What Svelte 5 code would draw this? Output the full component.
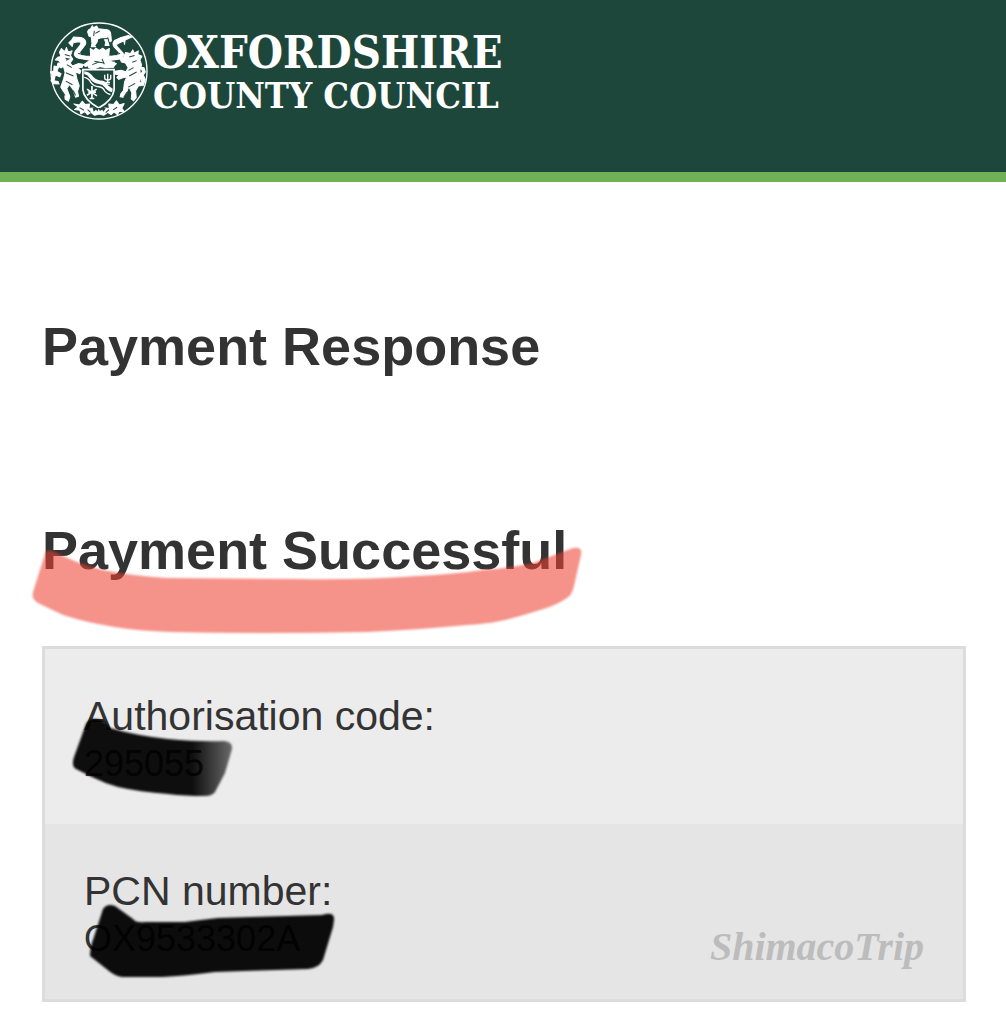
<script>
    const details = [
        { id: "auth", label: "Authorisation code:", value: "295055" },
        { id: "pcn", label: "PCN number:", value: "OX9533302A" },
    ];
</script>

<header class="site-header">
    <a class="logo" href="/" aria-label="Oxfordshire County Council">
        <svg class="crest" viewBox="33 22 292 292" aria-hidden="true">
            <circle cx="179" cy="168" r="143" fill="none" stroke="#fff" stroke-width="4" />
            <g fill="#fff" stroke="#fff" stroke-width="3" stroke-linejoin="round">
                <!-- Ox on the helm -->
                <path d="M154 42l5-9 4 6 9-5 5 8 26 3q10 2 11 13l2 20-4 3-6-20-4 9 7 22h-12l2-8-5-14-18 1-3 12-7 8 3 5h-13l2-10-2-19-7-3-4-13q1-7 9-9z" />
                <path d="M153 101l9 6 8-7 10 7 10-7 9 7 11-6-2 22-54 1z" />
                <!-- Mantling ribbons -->
                <path d="M103 67l22 1q17 4 14 20l-8 11-10 13 5 10 29 3 52-1 26-2 7-9-16-17q-7-9 1-19l20-9 21-6 11 5-20 9-2 13-2-11-17 8q-9 4 0 12l15 17q4 12-9 17l-32 5 21 9-7 7-23-12-36 1-26 13-7-5 21-14-35-6q-18-6-10-21l14-17q8-10-5-11l-15 3-3 11-10-11 9-9z" />
                <path d="M144 148q12-18 37-20l24 9 14 13-15 8-22-3-18 7-16-4z" />
                <!-- Left supporter -->
                <path d="M67 101l10 9 5-12 5 13 12-3-5 14 7 11-8 11 7 9 17-7 14 2-2 9-14 1 10 9-3 9-13-6 4 21 7 21-5 17 3 14-9 3-7-22-11-16-8 12 9 24-4 14-10-6-1-16-12-20 9-26 4-18-5-18-8 5-10-8 2-7 9 1-8-9-9-1 7-8 10-2-5-13z" />
                <path d="M45 153l14 2-5 14 12 7-4 9-13-5-4 17 12 2 3 8-16-1-8-9 5-17-7-9 10-3z" />
                <!-- Right supporter -->
                <path d="M258 113l15 3 7-11 4 10 12-7-1 11 12 5-6 11 5 15-5 16 2 22-5 22-10 17 2 20-8 10-7-6 2-18-9-19-8 20-9 12-9-1 2-9 8-10 3-25 7-15-12 2-12 5-6-6 8-8-12-1-2-9 19-3 14 4 7-12-8-14-12-3-5-11 12-3z" />
                <path d="M291 175l9 3 9-7-5-14 9 1 4 13-6 9 6 13-6 18-13 1-2-7 11-4-3-11-13-4z" />
                <!-- Small crown over the shield -->
                <path d="M192 145l8 8 6-11 8 8 10-9-1 16-28 1z" />
                <!-- Compartment -->
                <path d="M104 266l17 3 8-11 9 10 13-2-2 14 13-2 7 11 10-9 11 9 6-11 14 2-2-14 14 2 9-11 8 12 15-4-7 14 7 10-15-1-5 10-10-8-9 8-10-7-12 9-13-4-14 4-11-9-10 7-8-9-12 7-3-11-16-2 11-8z" />
            </g>
            <g fill="none" stroke="#1e473b" stroke-width="3">
                <path d="M165 48l-2 16M182 73l23-2M168 56l13-7" />
                <path d="M117 116l28 5M215 120l27-4M165 139l28 5M159 149l20-8M188 132l7 16" />
                <path d="M77 119l15 4M79 130l10 2-8 4M83 149l15 9M80 173l23 10M80 198l20 11M102 226l7 15M70 231l8 10" />
                <path d="M285 122l-16 4M291 137l-13 5M282 158l-15 8M291 171l-22 12M287 205l-21 11M262 231l-9 15" />
                <path d="M121 277l13 8M145 283l9 8M199 292l10-9M221 284l12-8" />
            </g>
            <!-- Shield -->
            <path d="M131 164h93v60q-4 31-46 54-44-25-47-54z" fill="#1e473b" stroke="#fff" stroke-width="5" />
            <path d="M135 169q15 2 23 12 9 14 24 15 18 0 24 15l14 10-2 10q-15-4-21-14-7-9-19-10-19-3-27-18-6-10-16-12z" fill="#fff" />
            <path d="M135 187q13 2 19 14 9 13 25 14 13 2 17 13 7 8 17 10" fill="none" stroke="#fff" stroke-width="4" />
            <path d="M158 213v39M143 222l30 20M143 240l29-18M147 231h23M151 250h14" fill="none" stroke="#fff" stroke-width="5" />
            <path d="M196 179v10q0 6 9 6t9-6v-10M205 176v26M199 202h13M200 207h11" fill="none" stroke="#fff" stroke-width="4" />
            <path d="M160 278h39l-6 11-8-5-7 8-7-8-8 5z" fill="#1e473b" />
            <path d="M165 293l4-10 5 7 4-10 5 10 6-7 3 10z" fill="#fff" />
        </svg>
        <span class="wordmark">
            <span class="wordmark-top">OXFORDSHIRE</span>
            <span class="wordmark-bottom">COUNTY COUNCIL</span>
        </span>
    </a>
</header>

<main>
    <h1>Payment Response</h1>

    <h2>
        Payment Successful
        <svg class="marker" viewBox="26 540 564 100" aria-hidden="true">
            <path
                d="M45 554Q46 548 55 552Q75 563 103 570Q133 576 167 578L300 579Q360 580 417 576Q455 574 483 570Q510 568 533 563L573 548Q583 546 581 555L574 586Q572 595 567 598Q555 606 540 610Q515 618 500 621Q485 624 467 625Q415 630 367 632Q270 634 170 632Q110 630 63 615L38 603Q31 599 33 592Z"
                fill="#ee4030"
                fill-opacity="0.57"
            />
        </svg>
    </h2>

    <dl class="details">
        {#each details as item}
            <div class="detail-row">
                <dt>{item.label}</dt>
                <dd>{item.value}</dd>
                {#if item.id === "auth"}
                    <svg class="scribble scribble-auth" viewBox="65 709 180 96" aria-hidden="true">
                        <defs>
                            <linearGradient id="ink-fade">
                                <stop offset="0.75" stop-color="#000" stop-opacity="0.94" />
                                <stop offset="1" stop-color="#000" stop-opacity="0.55" />
                            </linearGradient>
                        </defs>
                        <path
                            d="M86 724Q90 716 104 721L110 728Q138 736 168 739Q200 742 224 741Q233 742 232 749L225 773L215 792Q212 796 205 796Q185 796 168 794Q140 792 118 787Q104 783 92 777L76 769Q71 766 74 757Z"
                            fill="url(#ink-fade)"
                        />
                    </svg>
                {:else}
                    <svg class="scribble scribble-pcn" viewBox="75 894 270 96" aria-hidden="true">
                        <path
                            d="M103 909Q107 903 115 906L133 919Q136 923 145 922L185 922Q200 920 218 918L322 915Q335 911 334 920L333 927L323 960Q319 968 308 969L215 972Q185 976 162 977L122 977Q115 976 109 971L90 956Q90 947 94 937Z"
                            fill="#000"
                            fill-opacity="0.95"
                        />
                    </svg>
                {/if}
            </div>
        {/each}
        <div class="watermark">ShimacoTrip</div>
    </dl>
</main>

<style>
    :global(body) {
        margin: 0;
        background: #fff;
        color: #333;
        font-family: "Liberation Sans", Arial, sans-serif;
    }

    /* Header */
    .site-header {
        box-sizing: border-box;
        min-height: 182px;
        padding: 22px 50px;
        background: #1e473b;
        border-bottom: 10px solid #70b158;
    }

    .logo {
        display: inline-flex;
        gap: 5px;
        color: #fff;
        text-decoration: none;
    }

    .crest {
        width: 98px;
        height: 98px;
    }

    .wordmark {
        display: flex;
        flex-direction: column;
        padding-top: 8px;
        font-family: "DejaVu Serif Condensed", "DejaVu Serif", serif;
        font-weight: bold;
        white-space: nowrap;
    }

    .wordmark-top {
        font-size: 45px;
        line-height: 46px;
    }

    .wordmark-bottom {
        font-size: 36px;
        line-height: 38px;
    }

    /* Content */
    main {
        padding: 132px 40px 22px 42px;
    }

    h1,
    h2 {
        margin: 0;
        font-size: 54px;
        line-height: 64px;
    }

    h2 {
        position: relative;
        margin: 140px 0 64px;
    }

    .marker {
        position: absolute;
        left: -16px;
        top: 22px;
        width: 564px;
        height: 100px;
        filter: blur(1px);
    }

    .details {
        position: relative;
        margin: 0;
        border: 3px solid #dcdcdc;
    }

    .detail-row {
        position: relative;
        padding: 43px 39px 36px;
        background: #ececec;
    }

    .detail-row:nth-child(even) {
        background: #e5e5e5;
    }

    dt {
        font-size: 41px;
        line-height: 48px;
    }

    dd {
        margin: 0;
        font-size: 36px;
        line-height: 48px;
    }

    /* Pen strokes over the values */
    .scribble {
        position: absolute;
        height: 96px;
        filter: blur(1px);
    }

    .scribble-auth {
        left: 20px;
        top: 60px;
        width: 180px;
    }

    .scribble-pcn {
        left: 30px;
        top: 70px;
        width: 270px;
    }

    .watermark {
        position: absolute;
        right: 39px;
        bottom: 28px;
        color: #bcbcbc;
        font-family: "Liberation Serif", serif;
        font-size: 40px;
        font-style: italic;
        font-weight: bold;
        line-height: 48px;
    }
</style>
